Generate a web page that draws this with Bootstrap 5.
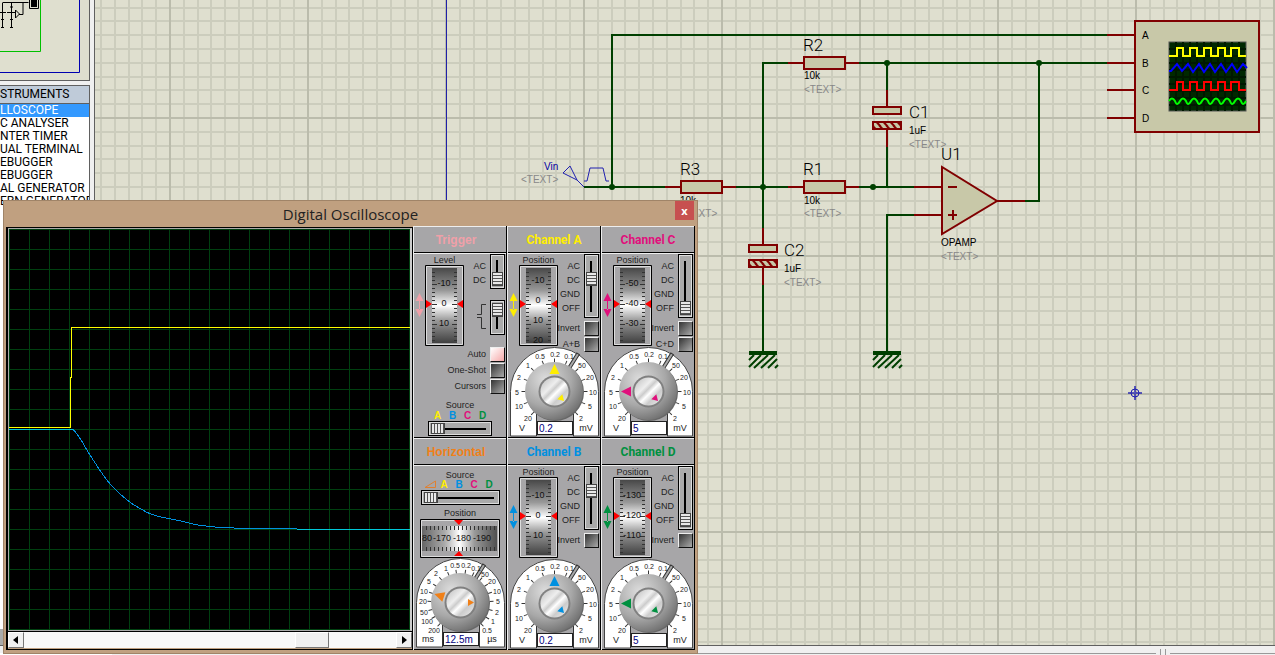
<!DOCTYPE html>
<html lang="en">
<head>
<meta charset="utf-8">
<meta name="viewport" content="width=device-width, initial-scale=1">
<title>Digital Oscilloscope</title>
<link href="https://cdn.jsdelivr.net/npm/bootstrap@5.3.0/dist/css/bootstrap.min.css" rel="stylesheet">
<script src="https://cdn.jsdelivr.net/npm/bootstrap@5.3.0/dist/js/bootstrap.bundle.min.js"></script>
<style>
body{font-family:"Liberation Sans",Arial,sans-serif;font-size:12px;line-height:13px;color:#000;background:#f0f0f0}
svg{display:block}
/* sidebar */
.side{width:95px;background:#f0f0f0;border-right:1px solid #606060}
.side-inner{width:90px}
.preview{height:81px;background:#dfdfcf;border-right:1px solid #606060;border-bottom:1px solid #606060}
.picker{border:1px solid #606060;border-left:0;border-bottom:16px solid #aaa;background:#fff;font-family:Roboto,sans-serif;margin-top:4px}
.picker h2{font-size:12px;line-height:17px;background:#bfcbd9;border-bottom:1px solid #606060}
.picker a{color:#000;height:13px;white-space:nowrap}
.picker a.on{background:#39f;color:#fff}
/* sheet */
.sheet{background:#dfdfcf}
.sheet text{font-size:10px}
.sheet text.ref{font-family:Roboto,sans-serif;font-weight:300;font-size:17px}
.sheet .note{fill:#888}
.wire{stroke:#004000;stroke-width:2;fill:none}
.pin{stroke:#800000;stroke-width:2;fill:none}
.part{stroke:#800000;stroke-width:2;fill:#c8c8a8}
.foot{height:10px;border-top:1px solid #606060}
.foot .cell{height:2px;border-top:1px solid #999}
.foot .tab-strip{width:112px;height:2px;background:#fff}
.foot .bar{width:1px;height:6px;background:#999}
/* oscilloscope window */
.scope{left:3px;top:200px;width:695px;background:#c0a080;border:1px solid #a08468;padding:0 2px 3px}
.titlebar{height:25px}
.titlebar h1{font-family:"Open Sans",sans-serif;font-size:15px;color:#222}
.btn-x{width:19px;height:19px;right:1px;background:#c75050;color:#fff;font:bold 11px/17px "Open Sans",sans-serif}
.crt{width:407px;border:1px solid #000;border-left-width:2px;margin-top:1px}
.crt .tube{border:1px solid #aaa;border-right:2px solid #ccc}
.hbar{height:17px;border-top:1px solid #000;background:#f8f8f8}
.hbar button,.hbar .grip{width:16px;background:#f0f0f0;border:1px solid #fff;border-right-color:#777;border-bottom-color:#777}
.hbar .grip{width:34px;margin-right:67px}
.deck{display:grid;grid-template-columns:repeat(3,94px)}
.pane{background:#a7a6a8;border-left:1px solid #eee;border-right:1px solid #000;font-size:9px;line-height:14px;color:#222}
.pane h2{height:27px;font:bold 12px/27px Roboto,sans-serif;color:var(--tone);border-top:1px solid #eee;border-bottom:1px solid #000}
.pane h2.wide{font-family:"Liberation Sans",sans-serif}
.inner{height:185px;border-top:1px solid #eee;border-bottom:1px solid #000}
.controls{height:93px}
.side-ctl{padding-right:1px}
.cap{height:11px;line-height:12px}
.arrows{width:11px;padding-left:1px;padding-top:39px}
.legend{padding-top:5px}
.tight{gap:1px}
.well{border:1px solid #000;outline:1px solid #ddd;outline-offset:-2px;background:#aaa}
.v4{width:15px;height:64px}.v2{width:15px;height:35px}
.h1x{height:15px}
.well input{-webkit-appearance:none;appearance:none;flex:none;background:none;height:11px;margin:0}
.v4 input{width:57px;transform:rotate(90deg)}
.v2 input{width:29px;transform:rotate(90deg)}
.h1x input{width:calc(100% - 4px)}
.well input::-webkit-slider-runnable-track{height:11px;background:linear-gradient(#000,#000) center/calc(100% - 6px) 2px no-repeat}
.well input::-webkit-slider-thumb{-webkit-appearance:none;width:14px;height:11px;border:1px solid #444;background:repeating-linear-gradient(90deg,#e8e8e8 0 2px,#555 2px 3px)}
.switch-row label{line-height:15px}
.push{-webkit-appearance:none;appearance:none;width:15px;height:15px;margin:0;border:1px solid #111;border-top-color:#eee;border-left-color:#eee;background:linear-gradient(135deg,#333,#aaa);flex:none}
.push:checked{background:linear-gradient(135deg,#fff,#f5a8a8)}
.lit{font-weight:bold;font-size:10px;line-height:11px;height:11px}
.tA{--tone:#ffee00}.tB{--tone:#0090e0}.tC{--tone:#e0107c}.tD{--tone:#009040}.tT{--tone:#f0a0a8}.tH{--tone:#f08018}
.lit span{color:var(--tone);width:15px;text-align:center}
.dial{height:90px}
.dial input{left:29px;top:74px;width:36px;height:14px;font-size:10px;line-height:12px;color:#000080;border:1px solid #222;background:#fff;padding:0 1px;border-radius:0}
.dial text{font-size:7px;text-anchor:middle;fill:#222}
.dial text.unit{font-size:9px}
.wheel text{font-size:9px;text-anchor:middle;fill:#111}
</style>
</head>
<body class="vh-100 overflow-hidden d-flex flex-column position-relative">

<div class="d-flex flex-fill overflow-hidden">
  <aside class="side flex-shrink-0 overflow-hidden">
    <div class="side-inner d-flex flex-column h-100">
      <div class="preview flex-shrink-0">
        <svg width="89" height="80" fill="none" stroke="#000">
          <path d="M79.500 0V72.500H0" stroke="#0000b0"/><path d="M40.500 0V51.500H0" stroke="#00c000"/>
          <path d="M0 12.500h6M2.500 3v25M11.500 3v25M2.500 2.500h26M7 12.500h8M15.500 10v8l4-4zM19 14.500h4V2M1 27.500h3M10 27.500h3M1 19.500h3M10 19.500h3M10 7h3"/>
          <path d="M29.500 0V8.500H38.500V0"/><path d="M31 0h6v7h-6z" fill="#000" stroke="none"/>
        </svg>
      </div>
      <nav class="picker flex-fill overflow-hidden">
        <h2 class="m-0 fw-normal">STRUMENTS</h2>
        <div id="devices"></div>
      </nav>
    </div>
  </aside>

  <main class="sheet flex-fill overflow-hidden">
    <svg width="100%" height="100%" role="img" aria-label="Schematic">
      <defs>
        <pattern id="grid" x="169" y="117" width="138" height="138" patternUnits="userSpaceOnUse">
          <path d="M15 0V138M29 0V138M42 0V138M56 0V138M70 0V138M84 0V138M98 0V138M111 0V138M125 0V138M0 15H138M0 29H138M0 42H138M0 56H138M0 70H138M0 84H138M0 98H138M0 111H138M0 125H138" stroke="#cccdbd" stroke-width="2"/>
          <path d="M1 0V138M0 1H138" stroke="#bbbcac" stroke-width="2"/>
        </pattern>
        <pattern id="hatch" width="7" height="8" patternUnits="userSpaceOnUse"><rect width="7" height="8" fill="#c8c8a8"/><path d="M-2 -2L9 10M-9 -2L2 10M5 -2L16 10" stroke="#800000" stroke-width="2"/></pattern>
        <g id="gnd"><path d="M-14 2H14" stroke="#004000" stroke-width="4"/><path d="M-14 9l5-5M-14 16L-2 4M-9 17L5 4M-2 17L12 4M5 17L14 8M12 17l3-3" stroke="#004000" stroke-width="2" fill="none"/></g>
        <g id="res"><path class="pin" d="M-36 0H-20M21 0H35"/><rect class="part" x="-20" y="-6" width="41" height="12"/></g>
        <g id="capn"><path class="pin" d="M0-28V-11M0 11V29"/><rect class="part" x="-14" y="-11" width="28" height="7"/><rect class="part" x="-14" y="4" width="28" height="7" style="fill:url(#hatch)"/></g>
        <g id="dot"><circle r="3" fill="#004000"/></g>
      </defs>
      <g transform="translate(-95 0)">
        <rect width="4000" height="3000" fill="url(#grid)"/>
        <path d="M446.500 0V300" stroke="#2020a8" stroke-width="1"/>
        <path class="wire" d="M584 187H666M612 187V35H1108M735 187H789M763 228V63H789M763 285V352M859 63H1108M887 63V90M887 147V187M859 187H914M914 215H887V352M1025 201H1039V63"/>
        <use href="#res" x="824" y="63"/><use href="#res" x="824" y="187"/><use href="#res" x="701" y="187"/>
        <use href="#capn" x="887" y="118"/><use href="#capn" x="763" y="256"/>
        <use href="#gnd" x="763" y="351"/><use href="#gnd" x="887" y="351"/>
        <use href="#dot" x="887" y="63"/><use href="#dot" x="1039" y="63"/><use href="#dot" x="612" y="187"/><use href="#dot" x="763" y="187"/><use href="#dot" x="873" y="187"/>
        <path class="pin" d="M914 187H942M914 215H942M997 201H1025"/>
        <path class="part" d="M942 167V234L997 201Z"/><path class="pin" d="M948 187h9M948 215h9M953 210v10"/>
        <path d="M563 173L570 166L577 180ZM577 180L584 187M584 181h3l3-13h13l3 13h3" fill="none" stroke="#2020b0"/>
        <path class="pin" d="M1107 35H1135M1107 63H1135M1107 90H1135M1107 118H1135"/>
        <rect class="part" x="1135" y="21" width="124" height="111"/>
        <rect x="1169" y="42" width="77" height="69" fill="#002800" stroke="#555"/>
        <path d="M1176 42v69M1183 42v69M1190 42v69M1197 42v69M1204 42v69M1211 42v69M1218 42v69M1225 42v69M1232 42v69M1239 42v69M1169 49h77M1169 56h77M1169 63h77M1169 70h77M1169 77h77M1169 84h77M1169 91h77M1169 98h77M1169 105h77" stroke="#001800" stroke-width="2"/>
        <g fill="none" stroke-width="2">
          <path stroke="#ff0" d="M1169 56h8v-8h6v8h7v-8h7v8h7v-8h7v8h7v-8h7v8h6v-8h8v8h7"/>
          <path stroke="#00f" d="M1169 71h2l6-7 5 7 6-7 5 8 6-8 5 8 6-8 5 8 6-8 5 8 6-8 5 8 6-8 4 4"/>
          <path stroke="red" d="M1169 90h8v-8h6v8h7v-8h7v8h7v-8h7v8h7v-8h7v8h6v-8h8v8h7"/>
          <path stroke="#0f0" d="M1169 101q3-5 6 0q2 6 5 0q3-5 6 0q2 6 5 0q3-5 6 0q2 6 5 0q3-5 6 0q2 6 5 0q3-5 6 0q2 6 5 0q3-5 6 0q2 6 5 0q3-5 6 0q2 6 5 0"/>
        </g>
        <g stroke="#2020b0" fill="none"><circle cx="1135" cy="393" r="4"/><path d="M1128 393h14M1135 386v14" stroke-width="2" opacity=".7"/></g>
        <text class="ref" x="803" y="51">R2</text><text class="ref" x="803" y="175">R1</text><text class="ref" x="680" y="175">R3</text><text class="ref" x="909" y="118">C1</text><text class="ref" x="784" y="256">C2</text><text class="ref" x="941" y="160">U1</text>
        <text x="804" y="79">10k</text><text x="804" y="204">10k</text><text x="680" y="204">10k</text>
        <text x="909" y="134">1uF</text><text x="784" y="272">1uF</text><text x="941" y="246">OPAMP</text>
        <text x="544" y="170" fill="#0000a0">Vin</text>
        <g class="note"><text x="804" y="93">&lt;TEXT&gt;</text><text x="804" y="217">&lt;TEXT&gt;</text><text x="680" y="217">&lt;TEXT&gt;</text><text x="909" y="148">&lt;TEXT&gt;</text><text x="784" y="286">&lt;TEXT&gt;</text><text x="941" y="260">&lt;TEXT&gt;</text><text x="521" y="183">&lt;TEXT&gt;</text></g>
        <text x="1142" y="39">A</text><text x="1142" y="67">B</text><text x="1142" y="94">C</text><text x="1142" y="122">D</text>
      </g>
    </svg>
  </main>
</div>
<footer class="foot d-flex align-items-end flex-shrink-0">
  <div class="tab-strip"></div><div class="cell flex-fill me-1"></div><div class="bar me-1"></div><div class="bar me-1"></div><div class="cell" style="width:105px"></div>
</footer>

<section class="scope position-absolute" aria-labelledby="ttl">
  <header class="titlebar d-flex position-relative justify-content-center align-items-center">
    <h1 class="m-0 fw-normal" id="ttl">Digital Oscilloscope</h1>
    <button class="btn-x border-0 p-0 position-absolute top-0" type="button" aria-label="Close">x</button>
  </header>
  <div class="d-flex">
    <div class="crt">
      <div class="tube">
        <svg width="401" height="401" role="img" aria-label="Traces">
          <defs><pattern id="div" width="20" height="20" patternUnits="userSpaceOnUse"><path d="M.5 0V20M0 .5H20" stroke="#004010"/></pattern></defs>
          <rect width="401" height="401" fill="#000"/><rect width="401" height="401" fill="url(#div)"/>
          <g fill="none" shape-rendering="crispEdges">
            <path stroke="#ff0" d="M0 198.500H61.500V148.500H62.500V98.500H401"/>
            <path stroke="#00c8d8" d="M0 200.500H64M288 300.500H401"/>
            <path stroke="#0090e0" d="M64 200.500C72 208 76 219 81 226L90 240C98 252 102 257 108 262C114 268 124 276 132 280C138 284 142 286 152 288L172 292C185 296 203 298 213 298.500L236 299.500H288"/>
          </g>
        </svg>
      </div>
      <div class="hbar d-flex" role="group" aria-label="Scroll trace">
        <button type="button" class="p-0 d-grid justify-content-center align-content-center" aria-label="Scroll left"><svg width="6" height="8"><path d="M5 0v8L0 4z"/></svg></button>
        <div class="flex-fill d-flex justify-content-end"><div class="grip"></div></div>
        <button type="button" class="p-0 d-grid justify-content-center align-content-center" aria-label="Scroll right"><svg width="6" height="8"><path d="M1 0v8l5-4z"/></svg></button>
      </div>
    </div>
    <div class="deck" id="deck"></div>
  </div>
</section>

<svg width="0" height="0" class="position-absolute">
  <defs>
    <linearGradient id="drumV" x2="0" y2="1"><stop stop-color="#484848"/><stop offset=".3" stop-color="#999"/><stop offset=".5" stop-color="#fff"/><stop offset=".7" stop-color="#999"/><stop offset="1" stop-color="#404040"/></linearGradient>
    <linearGradient id="drumH"><stop stop-color="#666"/><stop offset=".3" stop-color="#aaa"/><stop offset=".5" stop-color="#fff"/><stop offset=".7" stop-color="#999"/><stop offset="1" stop-color="#505050"/></linearGradient>
    <radialGradient id="knob" cx=".35" cy=".3" r=".75"><stop stop-color="#ddd"/><stop offset=".6" stop-color="#a8a8a8"/><stop offset="1" stop-color="#707070"/></radialGradient>
    <linearGradient id="capg" x2="1" y2="1"><stop stop-color="#bbb"/><stop offset=".35" stop-color="#eee"/><stop offset=".45" stop-color="#ccc"/><stop offset=".55" stop-color="#fff"/><stop offset=".7" stop-color="#ccc"/><stop offset="1" stop-color="#eee"/></linearGradient>
  </defs>
</svg>

<script>
const devices = ["LLOSCOPE", "C ANALYSER", "NTER TIMER", "UAL TERMINAL", "EBUGGER", "EBUGGER", "AL GENERATOR", "ERN GENERATOR"];
document.getElementById("devices").innerHTML =
  devices.map((d, i) => `<a href="#" class="d-block text-decoration-none${i ? "" : " on"}">${d}</a>`).join("");

const polar = (deg, r) => [46.5 + r * Math.sin(deg * Math.PI / 180), 44.5 - r * Math.cos(deg * Math.PI / 180)].map(Math.round);
const voltMarks = [[-135,20],[-112,10],[-90,5],[-68,2],[-45,1],[-22,0.5],[0,0.2],[22,0.1],[46,50],[68,20],[90,10],[112,5],[135,2]];
const timeMarks = [[-136,200],[-119,100],[-104,50],[-88,20],[-72,10],[-56,5],[-40,2],[-23,1],[-8,0.5],[9,0.2],[24,0.1],[41,50],[56,20],[72,10],[88,5],[104,2],[120,1],[136,0.5]];

function dial(marks, big, small, value, name, units) {
  const ticks = marks.map(([a]) => `<path d="M46.500 15.500v-4" transform="rotate(${a} 46.500 44.500)"/>`).join("");
  const nums = marks.map(([a, t]) => { const [x, y] = polar(a, 38); return `<text x="${x}" y="${y + 3}">${t}</text>`; }).join("");
  return `<div class="dial position-relative"><svg width="92" height="90">
    <path d="M2.500 89V44.500A44 44 0 0 1 90.500 44.500V89Z" fill="#fff" stroke="#444"/>
    <path d="M28.500 90V64H65V90Z" fill="#a7a6a8"/><path d="M28.500 89V66M65.500 89V66" stroke="#333"/>
    <g transform="rotate(32 46.500 44.500)"><path d="M45 16V0h3V16z" fill="#aaa" stroke="#333"/></g>
    <g stroke="#333">${ticks}</g>${nums}
    <circle cx="47" cy="45" r="29" fill="#666"/><circle cx="46" cy="44" r="29" fill="url(#knob)"/>
    <circle cx="46.500" cy="44.500" r="16" fill="#808080"/><circle cx="46.500" cy="44.500" r="14" fill="url(#capg)"/>
    <path d="M46.500 17l5 10h-10z" fill="var(--tone)" transform="rotate(${big} 46.500 44.500)"/>
    <path d="M46.500 31l3.500 6h-7z" fill="var(--tone)" transform="rotate(${small} 46.500 44.500)"/>
    <text class="unit" x="14" y="84">${units[0]}</text><text class="unit" x="78" y="84">${units[1]}</text>
  </svg><input type="text" class="position-absolute" aria-label="${name}" value="${value}"></div>`;
}

function wheel(labels) {
  let t = "";
  for (let y = 7; y < 76; y += 4) t += `M7 ${y}.500h${y % 20 === 19 ? 5 : 3}M32 ${y}.500h-${y % 20 === 19 ? 5 : 3}`;
  return `<svg class="wheel" width="39" height="81"><path d="M.5 .5h38v80h-38z" fill="#a7a6a8" stroke="#000"/><path d="M1.500 1.500h36v78h-36z" fill="none" stroke="#ddd"/>
    <svg x="7" y="3" width="25" height="75" viewBox="7 3 25 75"><rect x="7" y="3" width="25" height="75" fill="url(#drumV)"/><path d="${t}" stroke="#333"/>
    ${labels.map(([y, s]) => `<text x="19" y="${y}">${s}</text>`).join("")}</svg>
    <path d="M1 35l6 4-6 4zM38 35l-6 4 6 4z" fill="red"/></svg>`;
}

const arrows = `<div class="arrows"><svg width="9" height="24" fill="var(--tone)"><path d="M4.500 0l4 8h-8zM4.500 24l4-8h-8zM4 7h1v10H4z"/></svg></div>`;
const slider = (cls, max, val, name) => `<div class="well ${cls} d-flex justify-content-center align-items-center"><input type="range" min="0" max="${max}" value="${val}" aria-label="${name}"></div>`;
const push = (id, text, on) => `<div class="switch-row d-flex justify-content-end"><label for="${id}" class="pe-1">${text}</label><input class="push" type="checkbox" id="${id}"${on ? " checked" : ""}></div>`;

function left(cap, marks) {
  return `${arrows}<div><div class="cap text-center">${cap}</div>${wheel(marks)}</div>`;
}

function channel(c) {
  return `<section class="pane t${c.id}"><h2 class="m-0 text-center">Channel ${c.id}</h2><div class="inner">
    <div class="controls d-flex">${left("Position", c.marks)}
      <div class="side-ctl flex-fill d-flex flex-column tight position-relative z-1" style="width:41px">
        <div class="d-flex justify-content-end"><div class="legend text-end pe-1">AC<br>DC<br>GND<br>OFF</div>
        <div>${slider("v4", 3, c.mode, "Coupling " + c.id)}</div></div>
        <div class="d-flex flex-column text-nowrap tight pt-1" style="margin-top:-2px">${push("inv" + c.id, "Invert")}${c.sum ? push("sum" + c.id, c.sum) : ""}</div>
      </div></div>
    ${dial(voltMarks, c.big, 135, c.value, "Scale " + c.id, ["V", "mV"])}</div></section>`;
}

const letters = ["A","B","C","D"].map(l => `<span class="t${l}">${l}</span>`).join("");
const trigger = `<section class="pane tT"><h2 class="wide m-0 text-center pe-2">Trigger</h2><div class="inner">
  <div class="controls d-flex">${left("Level", [[21,"-10"],[41,"0"],[61,"10"]])}
    <div class="side-ctl flex-fill d-flex flex-column" style="gap:11px">
      <div class="d-flex justify-content-end gap-1"><div class="legend text-end">AC<br>DC</div>${slider("v2", 1, 1, "Trigger coupling")}</div>
      <div class="d-flex justify-content-end gap-1"><svg width="9" height="34" fill="none" stroke="#333"><path d="M0 14.500h4.500v-10H9M0 17.500h4.500v11H9"/></svg>${slider("v2", 1, 0, "Trigger edge")}</div>
    </div></div>
  <div class="side-ctl d-flex flex-column tight">${push("auto", "Auto", 1)}${push("shot", "One-Shot")}${push("curs", "Cursors")}</div>
  <div class="cap text-center" style="margin-top:5px">Source</div><div class="lit d-flex justify-content-center">${letters}</div>
  <div class="well h1x d-flex justify-content-center align-items-center mx-auto" style="width:64px"><input type="range" min="0" max="3" value="0" aria-label="Trigger source"></div>
</div></section>`;

let ht = "";
for (let x = 6; x < 78; x += 4) ht += `M${x}.500 7v4M${x}.500 32v-4`;
const horizontal = `<section class="pane tH"><h2 class="wide m-0 text-center pe-2">Horizontal</h2><div class="inner">
  <div class="cap text-center" style="margin-top:3px">Source</div>
  <div class="lit d-flex justify-content-center" style="height:10px;line-height:10px"><svg width="13" height="10"><path d="M1 7.500H11.500V1z" fill="none" stroke="#e08030"/></svg>${letters}</div>
  <div class="well h1x d-flex justify-content-center align-items-center" style="width:79px;margin:0 7px"><input type="range" min="0" max="4" value="0" aria-label="Horizontal source"></div>
  <div class="cap text-center" style="margin:2px 0 1px">Position</div>
  <svg class="wheel mx-auto" width="80" height="39"><path d="M.5 .5h79v38H.5z" fill="#a7a6a8" stroke="#000"/><path d="M1.500 1.500h77v36h-77z" fill="none" stroke="#ddd"/>
    <svg x="2" y="7" width="75" height="25" viewBox="2 7 75 25"><rect x="2" y="7" width="75" height="25" fill="url(#drumH)"/><path d="${ht}" stroke="#333"/>
    <text x="7" y="22">80</text><text x="22" y="22">-170</text><text x="42" y="22">-180</text><text x="62" y="22">-190</text></svg>
    <path d="M34 1h9l-4 5zM34 37h9l-4-5z" fill="red"/></svg>
  ${dial(timeMarks, -72, 90, "12.5m", "Time base", ["ms", "µs"])}
</div></section>`;

document.getElementById("deck").innerHTML = trigger
  + channel({id:"A", mode:1, sum:"A+B", big:0, value:"0.2", marks:[[18,"-10"],[38,"0"],[58,"10"],[78,"20"]]})
  + channel({id:"C", mode:3, sum:"C+D", big:-90, value:"5", marks:[[21,"-50"],[41,"-40"],[61,"-30"]]})
  + horizontal
  + channel({id:"B", mode:1, big:0, value:"0.2", marks:[[21,"-10"],[41,"0"],[61,"10"]]})
  + channel({id:"D", mode:3, big:-90, value:"5", marks:[[21,"-130"],[41,"-120"],[61,"-110"]]});
</script>
</body>
</html>
